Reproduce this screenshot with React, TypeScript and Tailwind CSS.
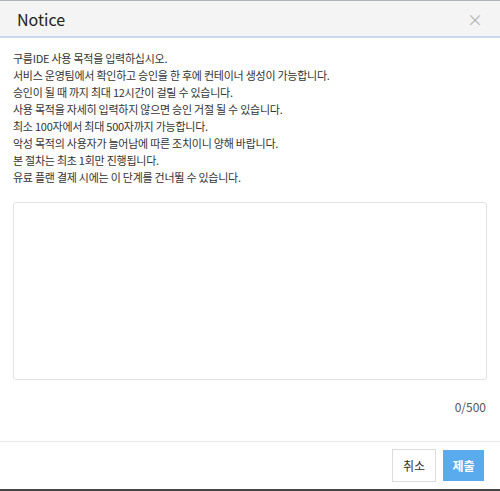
import React, { useState } from 'react';

const font = { fontFamily: '"Noto Sans CJK KR", "Noto Sans", sans-serif' };

const lines = [
  '구름IDE 사용 목적을 입력하십시오.',
  '서비스 운영팀에서 확인하고 승인을 한 후에 컨테이너 생성이 가능합니다.',
  '승인이 될 때 까지 최대 12시간이 걸릴 수 있습니다.',
  '사용 목적을 자세히 입력하지 않으면 승인 거절 될 수 있습니다.',
  '최소 100자에서 최대 500자까지 가능합니다.',
  '악성 목적의 사용자가 늘어남에 따른 조치이니 양해 바랍니다.',
  '본 절차는 최초 1회만 진행됩니다.',
  '유료 플랜 결제 시에는 이 단계를 건너뛸 수 있습니다.',
];

export default function App() {
  const [text, setText] = useState('');

  return (
    <div className="w-[500px] h-[491px] bg-white flex flex-col border-t border-[#b0b4ba] border-b-2 border-b-[#454545]" style={font}>
      <div className="h-[37px] shrink-0 bg-[#f4f4f4] border-b-2 border-[#cbd7f0] flex items-center justify-between pl-[17px] pr-[17px]">
        <span className="text-[16px] text-[#222] leading-none">Notice</span>
        <span className="text-[#b5b5b5] text-[16px] leading-none">×</span>
      </div>

      <div className="flex-1 flex flex-col px-[13px] pt-[12px]">
        <div className="text-[11px] leading-[17px] tracking-[-0.25px] text-[#333]">
          {lines.map(l => (
            <p key={l}>{l}</p>
          ))}
        </div>
        <textarea
          value={text}
          onChange={e => setText(e.target.value.slice(0, 500))}
          className="mt-[16px] h-[178px] w-full resize-none rounded-[3px] border border-[#e2e2e2] bg-white outline-none p-2 text-[12px]"
        />
        <div className="mt-[18px] text-right text-[12px] text-[#555] pr-px">{text.length}/500</div>
      </div>

      <div className="h-[48px] shrink-0 border-t border-[#e8e8e8] flex items-center justify-end gap-[7px] pr-[16px]">
        <button className="w-[44px] h-[33px] border border-[#dcdcdc] bg-white text-[12px] text-[#333]">취소</button>
        <button className="w-[41px] h-[31px] bg-[#5aabee] text-white text-[12px] font-bold">제출</button>
      </div>
    </div>
  );
}
